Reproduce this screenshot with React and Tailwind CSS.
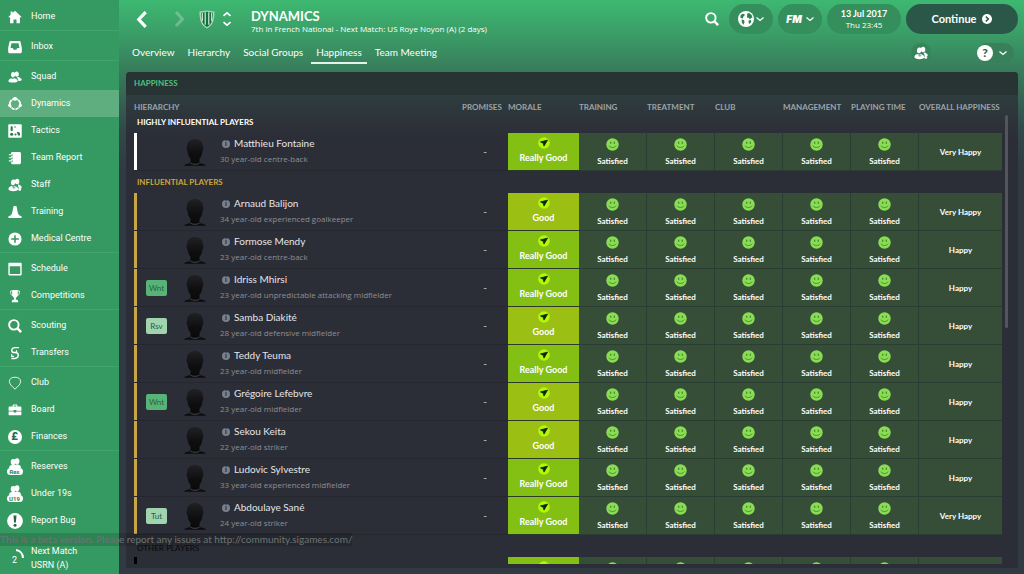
import React from "react";

/* ---------- icons ---------- */

const paths = {
  home: <path d="M8 .8 15.800 8.200h-2.200v7H9.700v-4.400H6.300v4.400H2.400v-7H.2L3 5.500V1.800h2.200v1.700z" />,
  inbox: (
    <path
      fillRule="evenodd"
      d="M3 1.200h10c.7 0 1.200.4 1.400 1L15.800 9v4.300c0 1-.7 1.700-1.700 1.700H1.900c-1 0-1.700-.7-1.700-1.700V9L1.600 2.200c.2-.6.7-1 1.400-1zM4 3.800 2.900 9h2.500l1.200 2h2.800l1.200-2h2.500L12 3.800z"
    />
  ),
  squad: (
    <g>
      <ellipse cx="10" cy="4.600" rx="2.400" ry="3" transform="rotate(-12 10 4.600)" />
      <path d="M10.500 8.200c1.500-1 3 .4 4.800 1.900.6.6.5 1.600-.2 2-1.300.6-2.600.4-3.400.1-.2-1.800-.8-2.800-1.700-3.500z" />
      <ellipse cx="5.800" cy="5.400" rx="2.400" ry="3.100" transform="rotate(10 5.800 5.400)" />
      <path d="M.4 12.600c0-1.700 1.800-2.600 3.600-3.300.8.9 2.600.9 3.400.2 1.800.5 3.700 1.300 3.700 3 0 1.300-2.400 1.900-5.300 1.900S.4 13.900.4 12.600z" />
    </g>
  ),
  dynamics: (
    <g>
      <circle cx="8" cy="8" r="6" fill="none" stroke="currentColor" strokeWidth="2" />
      <circle cx="8" cy="2.100" r="2.300" />
      <circle cx="1.900" cy="9.500" r="1.800" />
      <circle cx="14.100" cy="9.500" r="1.800" />
      <path d="M3.600 2.600l1.400 1.600M12.400 2.600 11 4.200M2.800 13.200l2-1.400M13.200 13.200l-2-1.400M8 12.600v3" stroke="#5fae80" strokeWidth="1" />
    </g>
  ),
  tactics: (
    <g>
      <rect x=".3" y=".3" width="15.400" height="15.400" rx="1.200" />
      <g fill="#2d7a50">
        <rect x="3" y="2.500" width="2.400" height="5.500" rx=".8" />
        <rect x="7.400" y="2.500" width="1.200" height="1.800" />
        <circle cx="4.200" cy="11.700" r="1.800" />
        <circle cx="8.600" cy="12" r="1.200" />
        <path d="M10 9.200h1.700c1.200 0 2 .8 2 2v1.900h-2.200z" />
      </g>
    </g>
  ),
  report: (
    <g>
      <path d="M5 1.200h8.200c.9 0 1.600.7 1.600 1.600v10.600c0 .9-.7 1.600-1.600 1.600H5c-.9 0-1.600-.7-1.600-1.600V2.800c0-.9.700-1.600 1.600-1.600z" />
      <path d="M1.200 4.800h4M1.200 8.300h4M1.200 11.800h4" stroke="#359a61" strokeWidth="2.200" />
      <path d="M1 4.300h3.600M1 7.800h3.600M1 11.300h3.600" stroke="currentColor" strokeWidth="1.200" />
    </g>
  ),
  staff: (
    <g>
      <ellipse cx="10.400" cy="3.900" rx="2.500" ry="3.100" />
      <path d="M11 7.700c1.600-.8 3 .6 4.400 2 .6.8.3 1.800-.5 2.100-.8.300-1.900.2-2.500 0z" />
      <ellipse cx="6" cy="4.900" rx="2.600" ry="3.300" transform="rotate(10 6 4.900)" />
      <path d="M.5 12.600c0-1.900 1.700-2.900 3.300-3.500.9.8 2.700.8 3.600 0 1.900.6 4.400 1.600 4.400 3.600 0 1.600-2.400 2.300-5.600 2.300S.5 14.200.5 12.600z" />
      <path d="M5 11h3.400M6.700 9.400v3.300" stroke="#359a61" strokeWidth=".7" />
      <circle cx="13.400" cy="13" r="1.700" />
    </g>
  ),
  training: <path d="M6.400 1h3.200l.7 3.300c.5 3.300 1.100 5.400 2.300 7.400l2.900 1.100v2H.5v-2l2.900-1.100C4.600 9.700 5.200 7.600 5.700 4.300z" />,
  medical: (
    <g>
      <circle cx="8" cy="8" r="7.500" />
      <path d="M8 3.600v8.800M3.600 8h8.800" stroke="#359a61" strokeWidth="1.800" />
    </g>
  ),
  schedule: (
    <path
      fillRule="evenodd"
      d="M1.500.8h13c.6 0 1.100.4 1.100 1v12.600c0 .6-.5 1-1.100 1h-13c-.6 0-1.100-.4-1.100-1V1.800c0-.6.500-1 1.100-1zM2 4.800v9h12v-9z"
    />
  ),
  cup: (
    <g>
      <path d="M4.800 1h6.400v5c0 2-.9 3.400-2.200 3.900v2.200c1.700.2 2.600.9 2.600 2.300v.8H4.400v-.8c0-1.400.9-2.100 2.600-2.300V9.900C5.700 9.400 4.800 8 4.800 6z" />
      <path d="M5 2.200H3v1.900c0 2 1 3 2.600 3.400M11 2.200h2v1.900c0 2-1 3-2.600 3.400" fill="none" stroke="currentColor" strokeWidth="1" />
    </g>
  ),
  search: (
    <g fill="none" stroke="currentColor">
      <circle cx="6.700" cy="6.700" r="5.400" strokeWidth="2.200" />
      <path d="m10.800 10.800 4.200 4.200" strokeWidth="2.800" />
    </g>
  ),
  transfers: (
    <g fill="none" stroke="currentColor" strokeWidth="1.600">
      <path d="M12.500 1.800H8.300C5.800 1.800 4.300 3 4.300 5c0 1.600 1.100 2.500 3 2.500h2.500" />
      <path d="M3.800 14.200h3.700c2.700 0 4.200-1.300 4.200-3.500 0-1.800-1.200-3.200-3.200-3.200" />
      <path d="M9.800 4.800v2.700M4.200 9.300v2.500h2.600" strokeWidth="1.300" />
    </g>
  ),
  club: (
    <path
      d="M8 15C4.500 12 1.600 9.300 1.600 6.200c0-2.900 2.400-4.800 6.400-4.800s6.400 1.900 6.400 4.800C14.400 9.300 11.500 12 8 15z"
      fill="none"
      stroke="currentColor"
      strokeWidth="1"
    />
  ),
  board: (
    <path
      fillRule="evenodd"
      d="M5.300 4V2.600c0-.6.4-1 1-1h3.400c.6 0 1 .4 1 1V4H14c.8 0 1.300.5 1.300 1.300v3.500H9.500V8h-3v.8H.7V5.300C.7 4.500 1.200 4 2 4zm1.200 0h3V2.800h-3zM.7 9.800h5.800v1h3v-1h5.800V13c0 .6-.4 1-1 1H1.700c-.6 0-1-.4-1-1z"
    />
  ),
  bug: (
    <g>
      <circle cx="8" cy="8" r="7.900" />
      <path d="M6.500 2.400h3L8.900 9.500H7.100z" fill="#2d5f43" />
      <circle cx="8" cy="12.200" r="1.500" fill="#2d5f43" />
    </g>
  ),
};

function Icon({ name, className = "size-[14px]" }) {
  return (
    <svg viewBox="0 0 16 16" fill="currentColor" className={className} aria-hidden="true">
      {paths[name]}
    </svg>
  );
}

function PoundIcon() {
  return (
    <span className="grid size-[14px] place-items-center rounded-full bg-white text-[11px] leading-none font-black text-[#2c6b49]">£</span>
  );
}

function TeamIcon({ tag }) {
  return (
    <span className="flex flex-col items-center">
      <svg viewBox="0 0 16 10" className="h-[10px] w-4" fill="currentColor" aria-hidden="true">
        <ellipse cx="10" cy="3.300" rx="2.400" ry="3" />
        <ellipse cx="6.200" cy="4" rx="2.500" ry="3.100" />
        <path d="M2 10c0-2 1.500-2.700 3-3h3c1-.7 2-.8 3-.6 2 .6 3 1.600 3 3.600z" />
      </svg>
      <span className="w-4 rounded-full bg-white text-center text-[6px] leading-[7px] font-bold text-[#2f7d51]">{tag}</span>
    </span>
  );
}

function Chevron({ d, className, width = 3 }) {
  return (
    <svg viewBox="0 0 16 16" className={className} fill="none" stroke="currentColor" strokeWidth={width} aria-hidden="true">
      <path d={d} />
    </svg>
  );
}

const DOWN = "M1 5l7 6 7-6";

function Crest() {
  return (
    <svg viewBox="0 0 16 19" className="h-[19px] w-4" aria-hidden="true">
      <path d="M.5 1.500C3 1.500 5.500.5 8 .5s5 1 7.500 1c.2 8-1.500 14-7.500 17C2 15.500.3 9.500.5 1.500z" fill="#a9d6b6" />
      <path d="M2 2.700c2-.1 4-.9 6-.9s4 .8 6 .9c0 6.800-1.500 11.800-6 14.300C3.500 14.500 2 9.500 2 2.700z" fill="#14713c" />
      <path d="M3.300 2.800v8.200M6.200 2.300v12.400M9.800 2.300v12.400M12.700 2.800v8.200" stroke="#e3f2e6" strokeWidth="1.100" />
    </svg>
  );
}

function Globe() {
  return (
    <svg viewBox="0 0 16 16" className="size-4" aria-hidden="true">
      <circle cx="8" cy="8" r="8" fill="#fff" />
      <path
        d="M2.500 4.500 4.500 2.800l2.300.4-.5 1.800L4.800 6l.6 1-1.200.6-1.900-1.100zM3.500 8.600l2.500.6.6 1.800-1.200 2.700-1.400-1.900zM9.300 2.600l2-.6 2.300 2 .9 2.400-1.500.6-1 1.500-1.400-1.700-1.200.2-.4-1.700zM10.600 9.500l2.300-.5.3 2-1.600 2-1-1.200z"
        fill="#2f8055"
      />
    </svg>
  );
}

function Smiley() {
  return (
    <svg viewBox="0 0 13 13" className="size-[13px]" role="img" aria-label="Smiling face">
      <circle cx="6.500" cy="6.500" r="6.200" fill="#8bdc55" />
      <ellipse cx="4.700" cy="4.700" rx=".7" ry="1.200" fill="#4a8a34" />
      <ellipse cx="8.300" cy="4.700" rx=".7" ry="1.200" fill="#4a8a34" />
      <path d="M2.900 7.700c1.500 2.400 5.700 2.400 7.200 0" fill="none" stroke="#4a8a34" strokeWidth="1" />
    </svg>
  );
}

function MoraleArrow() {
  return (
    <svg viewBox="0 0 12 12" className="size-3" aria-hidden="true">
      <circle cx="6" cy="6" r="5.800" fill="#b2f80c" />
      <path d="M9.600 3.100 2.500 4.900l2.700 1.300.8 2.900z" fill="#11250a" stroke="#11250a" strokeWidth=".8" />
    </svg>
  );
}

function Silhouette() {
  return (
    <svg viewBox="0 0 22 28" className="h-7 w-[22px]" aria-hidden="true">
      <defs>
        <linearGradient id="head" x1="0" y1="0" x2="0" y2="1">
          <stop offset="0" stopColor="#212124" />
          <stop offset=".6" stopColor="#0e0e10" />
          <stop offset="1" stopColor="#0a0a0b" />
        </linearGradient>
      </defs>
      <path d="M0 27.800c.6-1.400 2.800-2 5-2.300l2-1h8l2 1c2.200.3 4.400.9 5 2.300z" fill="#0c0c0e" />
      <path
        d="M11 1C6 1 3 4 3 8.800c-.7 1-.5 3.600.5 4.500.4 3.600 1.300 5.500 3 7.700v3.700c2 1.800 7 1.800 9 0V21c1.700-2.200 2.600-4.100 3-7.700 1-.9 1.200-3.500.5-4.500C19 4 16 1 11 1z"
        fill="url(#head)"
      />
      <path d="M6.500 25.200c2.500 1.500 6.500 1.500 9 0" fill="none" stroke="#4a4b51" strokeWidth=".9" />
    </svg>
  );
}

/* ---------- sidebar ---------- */

const navGroups = [
  [["Home", "home"]],
  [["Inbox", "inbox"]],
  [
    ["Squad", "squad"],
    ["Dynamics", "dynamics"],
    ["Tactics", "tactics"],
    ["Team Report", "report"],
    ["Staff", "staff"],
    ["Training", "training"],
    ["Medical Centre", "medical"],
  ],
  [["Schedule", "schedule"], ["Competitions", "cup"]],
  [["Scouting", "search"], ["Transfers", "transfers"]],
  [["Club", "club"], ["Board", "board"], ["Finances", "pound"]],
  [["Reserves", "Res"], ["Under 19s", "U19"], ["Report Bug", "bug"]],
];

function NavIcon({ name }) {
  if (name === "pound") return <PoundIcon />;
  if (name === "Res" || name === "U19") return <TeamIcon tag={name} />;
  return <Icon name={name} className={name === "bug" ? "size-4" : "size-[14px]"} />;
}

function Sidebar() {
  return (
    <nav className="flex w-[119px] shrink-0 flex-col bg-[#359a61] font-['Roboto',sans-serif] text-[9px] text-white">
      {navGroups.map((group, i) => (
        <ul key={i} className={i === 0 ? "pt-[3px]" : "border-t border-[#42a56c] pt-[2px]"}>
          {group.map(([label, icon]) => (
            <li key={label}>
              <a
                href="#"
                aria-current={label === "Dynamics" ? "page" : undefined}
                className={
                  label === "Dynamics"
                    ? "flex h-[27px] items-center gap-2 bg-[#5fae80] pl-1.5"
                    : "flex h-[27px] items-center gap-2 pl-1.5"
                }
              >
                <span className="flex w-[17px] justify-center">
                  <NavIcon name={icon} />
                </span>
                <span className="pt-px">{label}</span>
              </a>
            </li>
          ))}
        </ul>
      ))}
      <a href="#" className="mt-2.5 flex gap-2 pl-1.5 leading-[14px]">
        <span className="relative flex w-[17px] items-center justify-center pt-1">
          2
          <svg viewBox="0 0 18 18" className="absolute top-1 left-0 size-[18px]" fill="none" stroke="#fff" strokeWidth="2" aria-hidden="true">
            <path d="M10 2c4 .6 7 3.800 7 8" />
          </svg>
        </span>
        <span>
          Next Match
          <br />
          USRN (A)
        </span>
      </a>
    </nav>
  );
}

/* ---------- header ---------- */

const tabs = ["Overview", "Hierarchy", "Social Groups", "Happiness", "Team Meeting"];

function Header() {
  return (
    <header className="text-white">
      <div className="flex h-[38px] items-center">
        <button aria-label="Back" className="ml-2">
          <Chevron d="M11 1 4.500 8l6.500 7" className="size-[17px]" />
        </button>
        <button aria-label="Forward" disabled className="ml-5 opacity-25">
          <Chevron d="M5 1l6.500 7L5 15" className="size-4" />
        </button>
        <a href="#" aria-label="Club" className="ml-3">
          <Crest />
        </a>
        <button aria-label="Switch section" className="ml-1.5">
          <svg viewBox="0 0 12 16" className="h-4 w-3" fill="none" stroke="currentColor" strokeWidth="1.600" aria-hidden="true">
            <path d="m2.500 4.800 3.500-3 3.500 3M2.500 11.200l3.500 3 3.500-3" />
          </svg>
        </button>
        <div className="ml-[18px] pt-1">
          <h1 className="text-[13px] leading-[14px] font-bold">DYNAMICS</h1>
          <p className="font-['Open_Sans',sans-serif] text-[8px] leading-[11px]">7th in French National - Next Match: US Roye Noyon (A) (2 days)</p>
        </div>
        <div className="ml-auto flex items-center gap-[5px]">
          <button aria-label="Search" className="mr-[5px]">
            <Icon name="search" className="size-[14px]" />
          </button>
          <button aria-label="World" className="flex h-[30px] w-11 items-center justify-center gap-0.5 rounded-full bg-[#358f5d]">
            <Globe />
            <Chevron d={DOWN} className="size-2" width={2.6} />
          </button>
          <button aria-label="FM menu" className="flex h-[30px] w-11 items-center justify-center gap-1 rounded-full bg-[#358f5d]">
            <span className="font-['Inter'] text-[10px] font-black italic">FM</span>
            <Chevron d={DOWN} className="size-2" width={2.6} />
          </button>
          <button className="flex h-[30px] w-[74px] flex-col items-center justify-center rounded-full bg-[#358f5d]">
            <span className="text-[9px] leading-[11px] font-bold">13 Jul 2017</span>
            <span className="font-['Open_Sans',sans-serif] text-[8px] leading-[11px]">Thu 23:45</span>
          </button>
          <button className="flex h-[30px] w-28 items-center justify-center gap-1.5 rounded-full bg-[#2b5748] text-[11px] font-bold">
            Continue
            <svg viewBox="0 0 12 12" className="size-[10px]" aria-hidden="true">
              <circle cx="6" cy="6" r="6" fill="#fff" />
              <path d="m4.600 3.200 3 2.800-3 2.800" fill="none" stroke="#2b5748" strokeWidth="1.800" />
            </svg>
          </button>
        </div>
      </div>
      <div className="flex h-[34px] items-start justify-between">
        <nav className="flex gap-[3px] pl-px text-[10px]">
          {tabs.map((t) => (
            <a
              key={t}
              href="#"
              className={t === "Happiness" ? "border-b-2 border-[#e3f3ea] px-[5px] pt-[7px] pb-0.5" : "border-b-2 border-transparent px-[5px] pt-[7px] pb-0.5"}
            >
              {t}
            </a>
          ))}
        </nav>
        <div className="flex items-center gap-[46px] pt-[5px] pr-1">
          <button aria-label="Staff" className="grid size-5 place-items-center rounded-full bg-[#37845b]">
            <Icon name="staff" className="size-[14px]" />
          </button>
          <button aria-label="Help" className="flex h-5 items-center gap-1.5 rounded-full bg-[#37805a] pr-[7px]">
            <span className="grid size-4 place-items-center rounded-full bg-white text-[12px] leading-none font-black text-[#2c6346]">?</span>
            <Chevron d={DOWN} className="size-2" width={2.6} />
          </button>
        </div>
      </div>
    </header>
  );
}

/* ---------- table ---------- */

const RG = "Really Good";
const sections = [
  {
    title: "HIGHLY INFLUENTIAL PLAYERS",
    head: "h-4 text-white",
    pad: "block pb-1.5",
    bar: "bg-white",
    players: [["Matthieu Fontaine", "30 year-old centre-back", RG, "Very Happy"]],
  },
  {
    title: "INFLUENTIAL PLAYERS",
    head: "h-[22px] text-[#c9a73b]",
    pad: "block",
    bar: "bg-[#c9a545]",
    players: [
      ["Arnaud Balijon", "34 year-old experienced goalkeeper", "Good", "Very Happy"],
      ["Formose Mendy", "23 year-old centre-back", RG, "Happy"],
      ["Idriss Mhirsi", "23 year-old unpredictable attacking midfielder", RG, "Happy", "Wnt"],
      ["Samba Diakité", "28 year-old defensive midfielder", "Good", "Happy", "Rsv"],
      ["Teddy Teuma", "23 year-old midfielder", RG, "Happy"],
      ["Grégoire Lefebvre", "23 year-old midfielder", "Good", "Happy", "Wnt"],
      ["Sekou Keita", "22 year-old striker", "Good", "Happy"],
      ["Ludovic Sylvestre", "33 year-old experienced midfielder", RG, "Happy"],
      ["Abdoulaye Sané", "24 year-old striker", RG, "Very Happy", "Tut"],
    ],
  },
  {
    title: "OTHER PLAYERS",
    head: "h-[22px] text-[#101114]",
    pad: "block pt-1",
    bar: "bg-black",
    players: [],
  },
];

const statuses = ["Training", "Treatment", "Club", "Management", "Playing time"];

function PlayerRow({ player, bar }) {
  const [name, desc, morale, overall, badge] = player;
  return (
    <tr className="h-[38px]">
      <td className="border-b border-[#26272f] p-0">
        <div className="flex h-[37px] items-stretch">
          <span className={`w-[3px] ${bar}`} />
          <span className="flex w-[47px] items-center pl-[9px]">
            {badge && (
              <span
                className={
                  badge === "Wnt"
                    ? "grid h-4 w-[21px] place-items-center rounded-xs bg-[#58b377] text-[8px] text-[#2b6341]"
                    : "grid h-4 w-[21px] place-items-center rounded-xs bg-[#9fd4ae] text-[8px] text-[#2b5a3e]"
                }
              >
                {badge}
              </span>
            )}
          </span>
          <span className="flex w-[22px] items-end pb-1">
            <Silhouette />
          </span>
          <div className="ml-3.5 pt-[3px]">
            <div className="flex items-center gap-1 text-[10px] leading-[15px] text-[#e4e5e8]">
              <span className="ml-0.5 grid size-2 place-items-center rounded-full bg-[#7d7f86] text-[7px] leading-none font-black text-[#2a2b34]">i</span>
              {name}
            </div>
            <div className="font-['Open_Sans',sans-serif] text-[8px] leading-[15px] text-[#8d8f95]">{desc}</div>
          </div>
        </div>
      </td>
      <td className="border-b border-[#26272f] p-0 text-center text-[10px] text-[#d4d5d8]">-</td>
      <td
        className={
          morale === RG
            ? "border-b border-[#2c3a2c] bg-[#84bf13] p-0 text-[9px] font-bold text-white"
            : "border-b border-[#2c3a2c] bg-[#9cbf13] p-0 text-[9px] font-bold text-white"
        }
      >
        <div className="flex h-[37px] flex-col items-center pt-1 leading-[18px]">
          <MoraleArrow />
          {morale}
        </div>
      </td>
      {statuses.map((s) => (
        <td key={s} className="border-r border-b border-[#2a3d32] bg-[#364e38] p-0 text-[8px] font-bold text-white">
          <div className="flex h-[37px] flex-col items-center gap-[5px] pt-[5px] leading-[11px]">
            <Smiley />
            Satisfied
          </div>
        </td>
      ))}
      <td className="border-b border-[#2a3d32] bg-[#364e38] p-0 text-center text-[8px] font-bold text-white">{overall}</td>
    </tr>
  );
}

/* The row that peeks in at the bottom edge of the scroll area. */
function PeekRow() {
  return (
    <tr className="h-[7px]">
      <td className="p-0">
        <div className="h-[7px] w-[3px] bg-black" />
      </td>
      <td className="p-0" />
      <td className="bg-[#84bf13] p-0">
        <div className="flex h-[7px] justify-center overflow-hidden pt-1">
          <div className="shrink-0">
            <MoraleArrow />
          </div>
        </div>
      </td>
      {statuses.map((s) => (
        <td key={s} className="border-r border-[#2a3d32] bg-[#364e38] p-0">
          <div className="flex h-[7px] justify-center overflow-hidden pt-[5px]">
            <div className="shrink-0">
              <Smiley />
            </div>
          </div>
        </td>
      ))}
      <td className="bg-[#364e38] p-0" />
    </tr>
  );
}

function HappinessTable() {
  return (
    <table className="w-full table-fixed border-separate border-spacing-0 text-left">
      <colgroup>
        <col />
        <col className="w-[46px]" />
        <col className="w-[71px]" />
        {statuses.map((s) => (
          <col key={s} className="w-[68px]" />
        ))}
        <col className="w-[83px]" />
      </colgroup>
      <thead>
        <tr className="h-[22px] text-[8px] whitespace-nowrap text-[#9da3a6] [&>th]:p-0 [&>th]:pt-0.5 [&>th]:font-bold">
          <th>HIERARCHY</th>
          <th>PROMISES</th>
          <th>MORALE</th>
          {statuses.map((s) => (
            <th key={s} className="uppercase">{s}</th>
          ))}
          <th>OVERALL HAPPINESS</th>
        </tr>
      </thead>
      {sections.map((s) => (
        <tbody key={s.title}>
          <tr className={s.head}>
            <th colSpan={9} className="p-0 pl-[3px] text-[8px] leading-[10px] font-bold">
              <span className={s.pad}>{s.title}</span>
            </th>
          </tr>
          {s.players.map((p) => (
            <PlayerRow key={p[0]} player={p} bar={s.bar} />
          ))}
          {s.players.length === 0 && <PeekRow />}
        </tbody>
      ))}
    </table>
  );
}

export default function App() {
  return (
    <div className="relative flex h-screen overflow-hidden bg-[#313a43] font-['Lato',sans-serif] leading-normal">
      <Sidebar />
      <main className="flex min-w-0 flex-1 flex-col bg-[linear-gradient(180deg,#3eb871_0px,#3a9865_40px,#387c5b_70px,#31494a_130px,#313a43_170px)] pr-1.5 pb-1.5 pl-[7px]">
        <Header />
        <section className="flex min-h-0 flex-1 flex-col rounded-t-sm bg-[linear-gradient(180deg,#2f3c3e_24px,#2c2e37_64px)] pb-1">
          <h2 className="h-[23px] shrink-0 rounded-t-sm bg-[#273433] pl-2 text-[8px] leading-[23px] font-bold text-[#4cc27d]">HAPPINESS</h2>
          <div className="flex min-h-0 flex-1 gap-[3px] overflow-hidden pr-[10px] pl-2">
            <div className="min-w-0 flex-1">
              <HappinessTable />
            </div>
            <div className="mt-5 h-[213px] w-[3px] rounded-full bg-[#53555d]" />
          </div>
        </section>
      </main>
      <p className="absolute bottom-7 left-0 bg-black/15 text-[10px] leading-[13px] text-[#6e7474]">
        This is a beta version. Please report any issues at http://community.sigames.com/
      </p>
    </div>
  );
}
